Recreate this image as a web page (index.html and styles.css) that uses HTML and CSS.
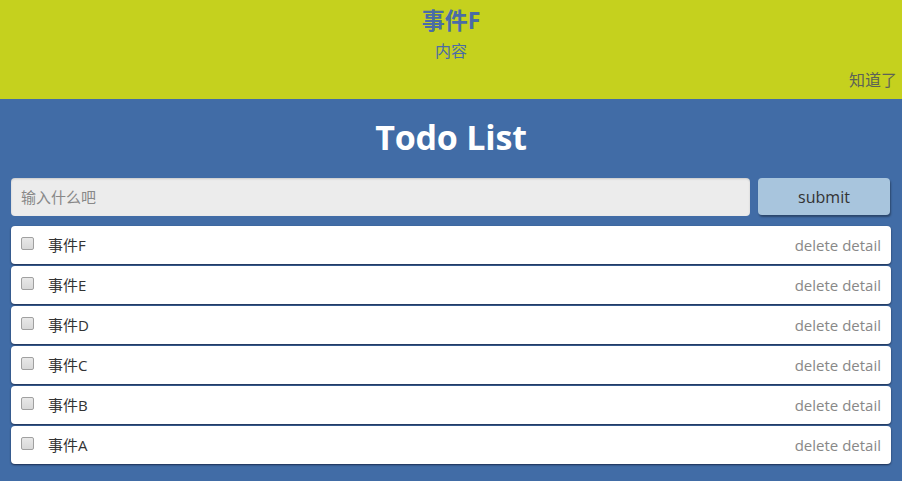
FILE: index.html
```html
<!DOCTYPE html>
<html>
<head>
<meta charset="utf-8">
<link rel="stylesheet" href="styles.css">
</head>
<body>
<div class="notice">
  <div class="notice-title">事件F</div>
  <div class="notice-body">内容</div>
  <div class="notice-ok">知道了</div>
</div>
<div class="app">
  <h1 class="app-title">Todo List</h1>
  <div class="form">
    <input class="form-input" type="text" placeholder="输入什么吧">
    <button class="form-btn">submit</button>
  </div>
  <ul class="list">
    <li class="item"><span class="check"></span><span class="name">事件F</span><span class="actions">delete detail</span></li>
    <li class="item"><span class="check"></span><span class="name">事件E</span><span class="actions">delete detail</span></li>
    <li class="item"><span class="check"></span><span class="name">事件D</span><span class="actions">delete detail</span></li>
    <li class="item"><span class="check"></span><span class="name">事件C</span><span class="actions">delete detail</span></li>
    <li class="item"><span class="check"></span><span class="name">事件B</span><span class="actions">delete detail</span></li>
    <li class="item"><span class="check"></span><span class="name">事件A</span><span class="actions">delete detail</span></li>
  </ul>
</div>
</body>
</html>
```
FILE: styles.css
```css
html, body {
  margin: 0;
  padding: 0;
  height: 100%;
}
body {
  background: #416ca6;
  font-family: "Open Sans", "Noto Sans CJK SC", sans-serif;
  overflow: hidden;
}
.notice {
  background: #c5d11e;
  height: 99px;
  display: flex;
  flex-direction: column;
  align-items: center;
  color: #4a6ca6;
}
.notice-title {
  font-size: 23px;
  font-weight: bold;
  line-height: 26px;
  margin-top: 7px;
}
.notice-body {
  font-size: 16px;
  line-height: 20px;
  margin-top: 8px;
}
.notice-ok {
  align-self: flex-end;
  font-size: 16px;
  line-height: 20px;
  color: #5c6257;
  margin-top: 9px;
  margin-right: 5px;
}
.app {
  padding: 0 11px;
}
.app-title {
  margin: 0;
  padding: 18px 0 0;
  height: 61px;
  box-sizing: border-box;
  text-align: center;
  color: #fff;
  font-size: 34px;
  line-height: 40px;
  font-weight: bold;
  letter-spacing: -0.2px;
}
.form {
  display: flex;
  gap: 8px;
  height: 38px;
  margin-top: 18px;
  padding-right: 1px;
}
.form-input {
  flex: 1;
  border: none;
  border-radius: 4px;
  background: #ececec;
  box-shadow: inset 0 1px 2px rgba(0,0,0,0.15);
  font-family: inherit;
  font-size: 15px;
  padding: 0 10px;
  outline: none;
}
.form-input::placeholder {
  color: #888;
}
.form-btn {
  width: 132px;
  height: 37px;
  border: none;
  border-radius: 4px;
  background: #a8c5dd;
  box-shadow: 1px 2px 2px rgba(0,0,0,0.35);
  font-family: inherit;
  font-size: 16px;
  color: #333;
}
.list {
  list-style: none;
  margin: 10px 0 0;
  padding: 0;
  display: flex;
  flex-direction: column;
  gap: 2px;
}
.item {
  height: 38px;
  background: #fff;
  border-radius: 4px;
  box-shadow: 0 1px 2px rgba(0,0,20,0.6);
  display: flex;
  align-items: center;
  padding: 0 10px;
  font-size: 15px;
  color: #333;
}
.check {
  width: 11px;
  height: 11px;
  border: 1px solid #a0a0a0;
  border-radius: 2px;
  background: linear-gradient(#e8e8e8, #d8d8d8);
  margin-right: 14px;
  margin-top: -3px;
}
.name {
  flex: 1;
  margin-top: -1px;
}
.actions {
  color: #888;
}
```
